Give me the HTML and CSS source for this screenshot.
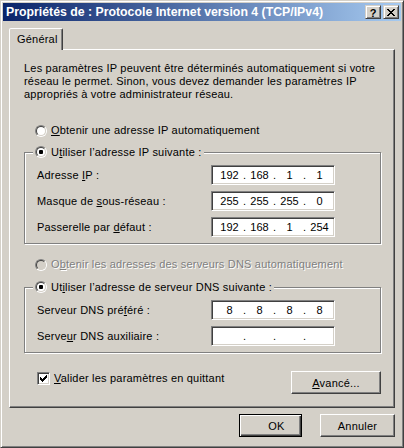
FILE: index.html
```html
<!DOCTYPE html>
<html lang="fr">
<head>
<meta charset="utf-8">
<title>Propriétés de : Protocole Internet version 4 (TCP/IPv4)</title>
<link rel="stylesheet" href="styles.css">
</head>
<body>
<div class="window">
  <div class="titlebar">
    <span class="title">Propriétés de : Protocole Internet version 4 (TCP/IPv4)</span>
    <div class="caption-btns">
      <span class="cbtn help">?</span>
      <span class="cbtn">
        <svg width="8" height="7" viewBox="0 0 8 7" shape-rendering="crispEdges"><path fill="#000" d="M0 0h2v1H0z M6 0h2v1H6z M1 1h2v1H1z M5 1h2v1H5z M2 2h4v1H2z M3 3h2v1H3z M2 4h4v1H2z M1 5h2v1H1z M5 5h2v1H5z M0 6h2v1H0z M6 6h2v1H6z"/></svg>
      </span>
    </div>
  </div>

  <div class="body">
    <div class="tabs"><span class="tab">Général</span></div>

    <div class="panel">
      <p class="intro">Les paramètres IP peuvent être déterminés automatiquement si votre<br>réseau le permet. Sinon, vous devez demander les paramètres IP<br>appropriés à votre administrateur réseau.</p>

      <div class="option r-auto"><span class="radio"></span><span><u>O</u>btenir une adresse IP automatiquement</span></div>

      <div class="group g-ip">
        <div class="legend"><span class="radio checked"></span><span>U<u>t</u>iliser l’adresse IP suivante :</span></div>
        <div class="frow"><span class="lbl">Adresse <u>I</u>P :</span>
          <div class="ip"><span class="seg">192</span><span class="dot">.</span><span class="seg">168</span><span class="dot">.</span><span class="seg">1</span><span class="dot">.</span><span class="seg">1</span></div>
        </div>
        <div class="frow"><span class="lbl">Masque de <u>s</u>ous-réseau :</span>
          <div class="ip"><span class="seg">255</span><span class="dot">.</span><span class="seg">255</span><span class="dot">.</span><span class="seg">255</span><span class="dot">.</span><span class="seg">0</span></div>
        </div>
        <div class="frow"><span class="lbl">Passerelle par <u>d</u>éfaut :</span>
          <div class="ip"><span class="seg">192</span><span class="dot">.</span><span class="seg">168</span><span class="dot">.</span><span class="seg">1</span><span class="dot">.</span><span class="seg">254</span></div>
        </div>
      </div>

      <div class="option r-dns disabled"><span class="radio"></span><span>O<u>b</u>tenir les adresses des serveurs DNS automatiquement</span></div>

      <div class="group g-dns">
        <div class="legend"><span class="radio checked"></span><span>Ut<u>i</u>liser l’adresse de serveur DNS suivante :</span></div>
        <div class="frow"><span class="lbl">Serveur DNS pré<u>f</u>éré :</span>
          <div class="ip"><span class="seg">8</span><span class="dot">.</span><span class="seg">8</span><span class="dot">.</span><span class="seg">8</span><span class="dot">.</span><span class="seg">8</span></div>
        </div>
        <div class="frow"><span class="lbl">Serve<u>u</u>r DNS auxiliaire :</span>
          <div class="ip"><span class="seg"></span><span class="dot">.</span><span class="seg"></span><span class="dot">.</span><span class="seg"></span><span class="dot">.</span><span class="seg"></span></div>
        </div>
      </div>

      <div class="bottom-row">
        <div class="option checkrow"><span class="check"><svg width="7" height="7" viewBox="0 0 7 7" shape-rendering="crispEdges"><path fill="#000" d="M6 0h1v1H6z M5 1h2v1H5z M0 2h1v1H0z M4 2h3v1H4z M0 3h2v1H0z M3 3h3v1H3z M0 4h5v1H0z M1 5h3v1H1z M2 6h1v1H2z"/></svg></span><span><u>V</u>alider les paramètres en quittant</span></div>
        <button class="btn adv"><u>A</u>vancé...</button>
      </div>
    </div>

    <div class="dlg-buttons">
      <button class="btn ok">OK</button>
      <button class="btn cancel">Annuler</button>
    </div>
  </div>
</div>
</body>
</html>
```
FILE: styles.css
```css
* { box-sizing: border-box; }

body {
  margin: 0;
  background: #d4d0c8;
  font-family: "Liberation Sans", Arial, sans-serif;
  font-size: 11px;
  letter-spacing: 0.2px;
  color: #000;
}

u { text-decoration: underline; text-underline-offset: 1px; }

.window {
  width: 404px;
  height: 448px;
  border: 1px solid;
  border-color: #d4d0c8 #404040 #404040 #d4d0c8;
  box-shadow: inset 1px 1px #fff, inset -1px -1px #808080;
  padding: 2px;
  background: #d4d0c8;
  display: flex;
  flex-direction: column;
}

/* title bar */
.titlebar {
  height: 18px;
  flex: none;
  background: linear-gradient(to right, #0a246a, #a6caf0);
  display: flex;
  align-items: center;
  justify-content: space-between;
  padding: 0 2px 0 3px;
}
.title {
  color: #fff;
  font-weight: bold;
  font-size: 12.3px;
  letter-spacing: 0;
  white-space: nowrap;
}
.caption-btns { display: flex; gap: 2px; }
.cbtn {
  width: 16px;
  height: 14px;
  border: 1px solid;
  border-color: #d4d0c8 #404040 #404040 #d4d0c8;
  box-shadow: inset 1px 1px #fff, inset -1px -1px #808080;
  background: #d4d0c8;
  display: flex;
  align-items: center;
  justify-content: center;
}
.cbtn.help {
  font-weight: bold;
  font-size: 11px;
  line-height: 12px;
  letter-spacing: 0;
  padding-top: 1px;
}

/* body */
.body {
  flex: 1;
  padding: 7px 6px 0;
  display: flex;
  flex-direction: column;
}
.tabs { display: flex; height: 21px; }
.tab {
  width: 54px;
  height: 22px;
  border: 1px solid;
  border-bottom: none;
  border-color: #fff #404040 transparent #fff;
  box-shadow: inset -1px 0 #808080;
  border-radius: 2px 2px 0 0;
  background: #d4d0c8;
  padding-left: 7px;
  line-height: 20px;
  position: relative;
  z-index: 1;
}

.panel {
  border: 1px solid;
  border-color: #fff #404040 #404040 #fff;
  box-shadow: inset -1px -1px #808080;
  padding: 12px 13px 13px 14px;
  display: flex;
  flex-direction: column;
}

.intro {
  margin: 0;
  line-height: 13px;
}

.option {
  display: flex;
  align-items: center;
  gap: 4px;
  height: 13px;
  line-height: 13px;
  white-space: nowrap;
}
.r-auto { margin: 23px 0 0 11px; }
.r-dns { margin: 14px 0 0 11px; }
.disabled { color: #808080; text-shadow: 1px 1px 0 #fff; }

/* radio */
.radio {
  width: 12px;
  height: 12px;
  flex: none;
  border-radius: 50%;
  border: 1px solid;
  border-color: #808080 #fff #fff #808080;
  position: relative;
}
.radio::before {
  content: "";
  position: absolute;
  inset: 0;
  border-radius: 50%;
  border: 1px solid;
  border-color: #404040 #d4d0c8 #d4d0c8 #404040;
  background: #fff;
}
.disabled .radio::before { background: #d4d0c8; }
.radio.checked::after {
  content: "";
  position: absolute;
  left: 3px;
  top: 3px;
  width: 4px;
  height: 4px;
  border-radius: 1px;
  background: #000;
}

/* group boxes */
.group {
  position: relative;
  border: 1px solid #808080;
  box-shadow: inset 1px 1px #fff, 1px 1px #fff;
  padding: 12px 45px 6px 12px;
  display: flex;
  flex-direction: column;
  gap: 6px;
}
.g-ip { margin-top: 15px; }
.g-dns { margin-top: 16px; }
.legend {
  position: absolute;
  left: 8px;
  top: -7px;
  height: 13px;
  line-height: 13px;
  padding: 0 2px;
  background: #d4d0c8;
  display: flex;
  align-items: flex-start;
  gap: 4px;
  white-space: nowrap;
}

.frow {
  display: flex;
  align-items: center;
  height: 20px;
}
.lbl { width: 174px; white-space: nowrap; }

.ip {
  width: 124px;
  height: 20px;
  background: #fff;
  border: 1px solid;
  border-color: #808080 #fff #fff #808080;
  box-shadow: inset 1px 1px #404040, inset -1px -1px #d4d0c8;
  display: flex;
  align-items: center;
  padding-left: 5px;
  letter-spacing: 0;
}
.seg { width: 25px; text-align: center; }
.dot { width: 5px; text-align: center; }

/* bottom row */
.bottom-row {
  display: flex;
  justify-content: space-between;
  align-items: flex-start;
  margin-top: 18px;
}
.checkrow { margin: 1px 0 0 13px; }
.check {
  width: 13px;
  height: 13px;
  flex: none;
  border: 1px solid;
  border-color: #808080 #fff #fff #808080;
  box-shadow: inset 1px 1px #404040, inset -1px -1px #d4d0c8;
  background: #fff;
  display: flex;
  align-items: center;
  justify-content: center;
}
.check svg { display: block; }

.btn {
  height: 23px;
  font: inherit;
  letter-spacing: inherit;
  color: #000;
  background: #d4d0c8;
  border: 1px solid;
  border-color: #fff #404040 #404040 #fff;
  box-shadow: inset -1px -1px #808080;
  padding: 0;
  margin: 0;
  text-align: center;
}
.adv { width: 90px; }

.dlg-buttons {
  display: flex;
  justify-content: flex-end;
  gap: 18px;
  margin-top: 6px;
}
.ok {
  width: 63px;
  border-color: #000;
  box-shadow: inset 1px 1px #fff, inset -1px -1px #404040, inset -2px -2px #808080;
  padding-left: 12px;
}
.cancel { width: 75px; }
```
